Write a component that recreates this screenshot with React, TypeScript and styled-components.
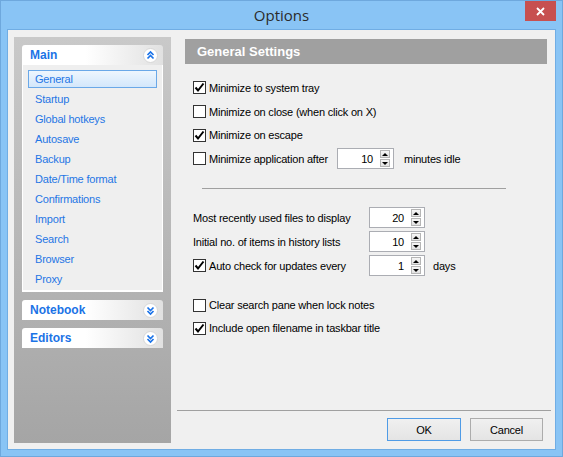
import styled, { createGlobalStyle, css } from "styled-components";

const GlobalStyle = createGlobalStyle`
  body {
    margin: 0;
  }
  * {
    box-sizing: border-box;
  }
`;

const Window = styled.div`
  width: 563px;
  height: 457px;
  background: #89c4f5;
  border: 1px solid #6ea8dd;
  display: flex;
  flex-direction: column;
  font-family: "Liberation Sans", Arial, sans-serif;
  font-size: 11px;
  letter-spacing: -0.2px;
  color: #000;
`;

const TitleBar = styled.div`
  height: 28px;
  display: grid;
  grid-template-columns: 1fr auto 1fr;
  align-items: start;
`;

const Title = styled.div`
  grid-column: 2;
  font-family: "Open Sans", "Noto Sans", sans-serif;
  font-size: 15px;
  letter-spacing: 0;
  line-height: 28px;
  color: #2b2b2b;
`;

const CloseButton = styled.div`
  grid-column: 3;
  justify-self: end;
  width: 31px;
  height: 20px;
  margin-right: 6px;
  background: #c75050;
  display: flex;
  align-items: center;
  justify-content: center;
`;

const Client = styled.div`
  flex: 1;
  margin: 0 6px 6px 6px;
  background: #f0f0f0;
  border: 1px solid #70ade4;
  display: flex;
  min-height: 0;
`;

const Sidebar = styled.div`
  width: 157px;
  margin: 7px 0 6px 6px;
  padding: 8px;
  background: linear-gradient(#c9c9c9, #a5a5a5);
  display: flex;
  flex-direction: column;
  gap: 8px;
`;

const Group = styled.div`
  display: flex;
  flex-direction: column;
`;

const GroupHeader = styled.div`
  height: 20px;
  border-radius: 3px 3px 0 0;
  background: linear-gradient(to right, #ffffff 45%, #e1e1e1);
  display: flex;
  align-items: center;
  justify-content: space-between;
  padding: 0 5px 0 8px;
  font-weight: bold;
  font-size: 12px;
  letter-spacing: 0;
  color: #1b73e6;
`;

const GroupList = styled.div`
  background: #efefef;
  border: 1px solid #fff;
  border-top: none;
  border-bottom-width: 2px;
  padding: 5px 5px 2px;
  display: flex;
  flex-direction: column;
  gap: 2px;
`;

const NavItem = styled.div<{ $selected?: boolean }>`
  height: 18px;
  display: flex;
  align-items: center;
  padding-left: 6px;
  border: 1px solid transparent;
  color: #1f76e5;
  ${(p) =>
    p.$selected &&
    css`
      border-color: #6aa8e8;
      background: linear-gradient(#eef6fe, #d3e7fb);
    `}
`;

const Main = styled.div`
  flex: 1;
  display: flex;
  flex-direction: column;
  padding-top: 9px;
`;

const SectionHeader = styled.div`
  height: 25px;
  margin: 0 8px 0 14px;
  padding-left: 12px;
  background: #a0a0a0;
  color: #fff;
  font-weight: bold;
  font-size: 13px;
  letter-spacing: 0;
  line-height: 25px;
`;

const Body = styled.div`
  flex: 1;
  padding: 12px 0 0 22px;
`;

const Row = styled.div<{ $h?: number; $mt?: number }>`
  height: ${(p) => p.$h ?? 24}px;
  margin-top: ${(p) => p.$mt ?? 0}px;
  display: flex;
  align-items: center;
  white-space: nowrap;
`;

const Box = styled.div`
  width: 13px;
  height: 13px;
  margin-right: 3px;
  border: 1px solid #333;
  background: #fff;
  display: flex;
  align-items: center;
  justify-content: center;
  flex-shrink: 0;
`;

const Label = styled.span<{ $w?: number }>`
  ${(p) =>
    p.$w !== undefined &&
    css`
      width: ${p.$w}px;
    `}
`;

const Suffix = styled.span<{ $ml: number }>`
  margin-left: ${(p) => p.$ml}px;
`;

const Divider = styled.div`
  width: 304px;
  height: 1px;
  margin: 17px 0 17px 9px;
  background: #a0a0a0;
`;

const SpinBox = styled.div<{ $w: number }>`
  width: ${(p) => p.$w}px;
  height: 21px;
  border: 1px solid #abadb3;
  background: #fff;
  display: flex;
  align-items: center;
  justify-content: flex-end;
  padding-right: 3px;
`;

const SpinValue = styled.span`
  margin-right: 7px;
`;

const SpinButtons = styled.div`
  display: flex;
  flex-direction: column;
  gap: 1px;
`;

const SpinButton = styled.div<{ $down?: boolean }>`
  width: 10px;
  height: 8px;
  border: 1px solid #b5b5b5;
  background: linear-gradient(#f6f6f6, #e2e2e2);
  display: flex;
  align-items: center;
  justify-content: center;
  &::after {
    content: "";
    border-left: 3px solid transparent;
    border-right: 3px solid transparent;
    ${(p) =>
      p.$down
        ? css`
            border-top: 3px solid #000;
          `
        : css`
            border-bottom: 3px solid #000;
          `}
  }
`;

const Footer = styled.div`
  margin: 0 4px 0 6px;
  border-top: 1px solid #a0a0a0;
  padding: 7px 8px 8px;
  display: flex;
  justify-content: flex-end;
  gap: 9px;
`;

const Button = styled.div<{ $primary?: boolean; $w: number }>`
  width: ${(p) => p.$w}px;
  height: 23px;
  border: 1px solid ${(p) => (p.$primary ? "#4f9be6" : "#acacac")};
  background: linear-gradient(#f0f0f0, #e4e4e4);
  display: flex;
  align-items: center;
  justify-content: center;
`;

const Check = ({ checked }: { checked?: boolean }) => (
  <Box>
    {checked && (
      <svg width="11" height="11" viewBox="0 0 11 11">
        <path d="M1.5 5.5 L4 8.5 L9.5 1.5" fill="none" stroke="#000" strokeWidth="2" />
      </svg>
    )}
  </Box>
);

const Spinner = ({ value, w }: { value: number; w: number }) => (
  <SpinBox $w={w}>
    <SpinValue>{value}</SpinValue>
    <SpinButtons>
      <SpinButton />
      <SpinButton $down />
    </SpinButtons>
  </SpinBox>
);

const Toggle = ({ up }: { up?: boolean }) => (
  <svg width="15" height="15" viewBox="0 0 15 15">
    <circle cx="7.5" cy="7.5" r="7" fill="#fff" stroke="#d6d6d6" />
    <g fill="none" stroke="#1b73e8" strokeWidth="1.7" transform={up ? undefined : "rotate(180 7.5 7.5)"}>
      <path d="M4.5 7 L7.5 4 L10.5 7" />
      <path d="M4.5 10.5 L7.5 7.5 L10.5 10.5" />
    </g>
  </svg>
);

const navItems = [
  "General",
  "Startup",
  "Global hotkeys",
  "Autosave",
  "Backup",
  "Date/Time format",
  "Confirmations",
  "Import",
  "Search",
  "Browser",
  "Proxy",
];

const App = () => {
  return (
    <>
      <GlobalStyle />
      <Window>
        <TitleBar>
          <Title>Options</Title>
          <CloseButton>
            <svg width="9" height="9" viewBox="0 0 9 9">
              <path d="M1 1 L8 8 M8 1 L1 8" stroke="#fff" strokeWidth="1.8" />
            </svg>
          </CloseButton>
        </TitleBar>
        <Client>
          <Sidebar>
            <Group>
              <GroupHeader>
                Main
                <Toggle up />
              </GroupHeader>
              <GroupList>
                {navItems.map((item, i) => (
                  <NavItem key={item} $selected={i === 0}>
                    {item}
                  </NavItem>
                ))}
              </GroupList>
            </Group>
            <Group>
              <GroupHeader>
                Notebook
                <Toggle />
              </GroupHeader>
            </Group>
            <Group>
              <GroupHeader>
                Editors
                <Toggle />
              </GroupHeader>
            </Group>
          </Sidebar>
          <Main>
            <SectionHeader>General Settings</SectionHeader>
            <Body>
              <Row $h={23.7}>
                <Check checked />
                <Label>Minimize to system tray</Label>
              </Row>
              <Row $h={23.7}>
                <Check />
                <Label>Minimize on close (when click on X)</Label>
              </Row>
              <Row $h={23.7}>
                <Check checked />
                <Label>Minimize on escape</Label>
              </Row>
              <Row $h={23.7}>
                <Check />
                <Label $w={128}>Minimize application after</Label>
                <Spinner value={10} w={57} />
                <Suffix $ml={10}>minutes idle</Suffix>
              </Row>
              <Divider />
              <Row>
                <Label $w={176}>Most recently used files to display</Label>
                <Spinner value={20} w={56} />
              </Row>
              <Row>
                <Label $w={176}>Initial no. of items in history lists</Label>
                <Spinner value={10} w={56} />
              </Row>
              <Row>
                <Check checked />
                <Label $w={160}>Auto check for updates every</Label>
                <Spinner value={1} w={56} />
                <Suffix $ml={8}>days</Suffix>
              </Row>
              <Row $h={23} $mt={16}>
                <Check />
                <Label>Clear search pane when lock notes</Label>
              </Row>
              <Row $h={23}>
                <Check checked />
                <Label>Include open filename in taskbar title</Label>
              </Row>
            </Body>
            <Footer>
              <Button $primary $w={74}>
                OK
              </Button>
              <Button $w={73}>Cancel</Button>
            </Footer>
          </Main>
        </Client>
      </Window>
    </>
  );
};

export default App;
